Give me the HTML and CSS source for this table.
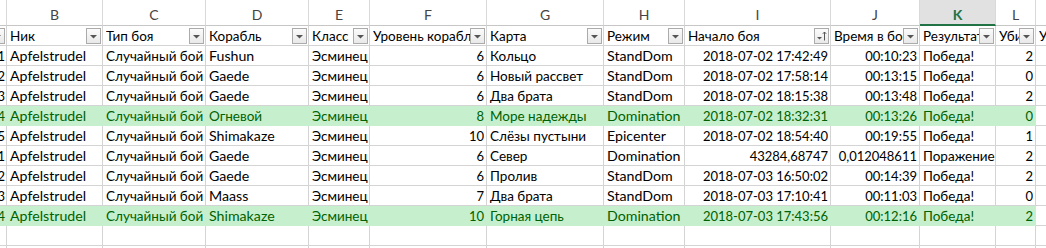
FILE: index.html
```html
<!DOCTYPE html>
<html lang="ru">
<head>
<meta charset="utf-8">
<title>Sheet</title>
<link rel="stylesheet" href="styles.css">
</head>
<body>
<div class="sheet">
  <div class="row letters">
    <div class="h"></div><div class="h">B</div><div class="h">C</div><div class="h">D</div><div class="h">E</div><div class="h">F</div><div class="h">G</div><div class="h">H</div><div class="h">I</div><div class="h">J</div><div class="h sel">K</div><div class="h">L</div><div class="h"></div>
  </div>
  <div class="row filters">
    <div class="c f"><span class="lbl"></span><span class="btn"><svg width="13" height="14" viewBox="0 0 13 14"><path d="M3 6h7l-3.5 3.5z" fill="#555"/></svg></span></div>
    <div class="c f"><span class="lbl">Ник</span><span class="btn"><svg width="13" height="14" viewBox="0 0 13 14"><path d="M3 6h7l-3.5 3.5z" fill="#555"/></svg></span></div>
    <div class="c f"><span class="lbl">Тип боя</span><span class="btn"><svg width="13" height="14" viewBox="0 0 13 14"><path d="M3 6h7l-3.5 3.5z" fill="#555"/></svg></span></div>
    <div class="c f"><span class="lbl">Корабль</span><span class="btn"><svg width="13" height="14" viewBox="0 0 13 14"><path d="M3 6h7l-3.5 3.5z" fill="#555"/></svg></span></div>
    <div class="c f"><span class="lbl">Класс</span><span class="btn"><svg width="13" height="14" viewBox="0 0 13 14"><path d="M3 6h7l-3.5 3.5z" fill="#555"/></svg></span></div>
    <div class="c f"><span class="lbl">Уровень корабля</span><span class="btn"><svg width="13" height="14" viewBox="0 0 13 14"><path d="M3 6h7l-3.5 3.5z" fill="#555"/></svg></span></div>
    <div class="c f"><span class="lbl">Карта</span><span class="btn"><svg width="13" height="14" viewBox="0 0 13 14"><path d="M3 6h7l-3.5 3.5z" fill="#555"/></svg></span></div>
    <div class="c f"><span class="lbl">Режим</span><span class="btn"><svg width="13" height="14" viewBox="0 0 13 14"><path d="M3 6h7l-3.5 3.5z" fill="#555"/></svg></span></div>
    <div class="c f"><span class="lbl">Начало боя</span><span class="btn"><svg width="13" height="14" viewBox="0 0 13 14"><path d="M2 8h5l-2.5 2.5z" fill="#555"/><path d="M9.5 11.5V3M7.8 4.8l1.7-1.8 1.7 1.8" stroke="#555" stroke-width="1" fill="none"/></svg></span></div>
    <div class="c f"><span class="lbl">Время в бою</span><span class="btn"><svg width="13" height="14" viewBox="0 0 13 14"><path d="M3 6h7l-3.5 3.5z" fill="#555"/></svg></span></div>
    <div class="c f"><span class="lbl">Результат</span><span class="btn"><svg width="13" height="14" viewBox="0 0 13 14"><path d="M3 6h7l-3.5 3.5z" fill="#555"/></svg></span></div>
    <div class="c f"><span class="lbl">Убийства</span><span class="btn"><svg width="13" height="14" viewBox="0 0 13 14"><path d="M3 6h7l-3.5 3.5z" fill="#555"/></svg></span></div>
    <div class="c f"><span class="lbl">Урон</span></div>
  </div>

  <div class="row"><div class="c n">1</div><div class="c">Apfelstrudel</div><div class="c">Случайный бой</div><div class="c">Fushun</div><div class="c">Эсминец</div><div class="c r">6</div><div class="c">Кольцо</div><div class="c">StandDom</div><div class="c r">2018-07-02 17:42:49</div><div class="c r">00:10:23</div><div class="c">Победа!</div><div class="c r">2</div><div class="c"></div></div>
  <div class="row"><div class="c n">2</div><div class="c">Apfelstrudel</div><div class="c">Случайный бой</div><div class="c">Gaede</div><div class="c">Эсминец</div><div class="c r">6</div><div class="c">Новый рассвет</div><div class="c">StandDom</div><div class="c r">2018-07-02 17:58:14</div><div class="c r">00:13:15</div><div class="c">Победа!</div><div class="c r">0</div><div class="c"></div></div>
  <div class="row"><div class="c n">3</div><div class="c">Apfelstrudel</div><div class="c">Случайный бой</div><div class="c">Gaede</div><div class="c">Эсминец</div><div class="c r">6</div><div class="c">Два брата</div><div class="c">StandDom</div><div class="c r">2018-07-02 18:15:38</div><div class="c r">00:13:48</div><div class="c">Победа!</div><div class="c r">2</div><div class="c"></div></div>
  <div class="row good"><div class="c n">4</div><div class="c">Apfelstrudel</div><div class="c">Случайный бой</div><div class="c ru">Огневой</div><div class="c">Эсминец</div><div class="c r">8</div><div class="c">Море надежды</div><div class="c">Domination</div><div class="c r">2018-07-02 18:32:31</div><div class="c r">00:13:26</div><div class="c">Победа!</div><div class="c r">0</div><div class="c plain"></div></div>
  <div class="row"><div class="c n">5</div><div class="c">Apfelstrudel</div><div class="c">Случайный бой</div><div class="c">Shimakaze</div><div class="c">Эсминец</div><div class="c r">10</div><div class="c">Слёзы пустыни</div><div class="c">Epicenter</div><div class="c r">2018-07-02 18:54:40</div><div class="c r">00:19:55</div><div class="c">Победа!</div><div class="c r">1</div><div class="c"></div></div>
  <div class="row"><div class="c n">1</div><div class="c">Apfelstrudel</div><div class="c">Случайный бой</div><div class="c">Gaede</div><div class="c">Эсминец</div><div class="c r">6</div><div class="c">Север</div><div class="c">Domination</div><div class="c r">43284,68747</div><div class="c r">0,012048611</div><div class="c">Поражение</div><div class="c r">2</div><div class="c"></div></div>
  <div class="row"><div class="c n">2</div><div class="c">Apfelstrudel</div><div class="c">Случайный бой</div><div class="c">Gaede</div><div class="c">Эсминец</div><div class="c r">6</div><div class="c">Пролив</div><div class="c">StandDom</div><div class="c r">2018-07-03 16:50:02</div><div class="c r">00:14:39</div><div class="c">Победа!</div><div class="c r">2</div><div class="c"></div></div>
  <div class="row"><div class="c n">3</div><div class="c">Apfelstrudel</div><div class="c">Случайный бой</div><div class="c">Maass</div><div class="c">Эсминец</div><div class="c r">7</div><div class="c">Два брата</div><div class="c">StandDom</div><div class="c r">2018-07-03 17:10:41</div><div class="c r">00:11:03</div><div class="c">Победа!</div><div class="c r">0</div><div class="c"></div></div>
  <div class="row good"><div class="c n">4</div><div class="c">Apfelstrudel</div><div class="c">Случайный бой</div><div class="c">Shimakaze</div><div class="c">Эсминец</div><div class="c r">10</div><div class="c">Горная цепь</div><div class="c">Domination</div><div class="c r">2018-07-03 17:43:56</div><div class="c r">00:12:16</div><div class="c">Победа!</div><div class="c r">2</div><div class="c plain"></div></div>
  <div class="row"><div class="c"></div><div class="c"></div><div class="c"></div><div class="c"></div><div class="c"></div><div class="c"></div><div class="c"></div><div class="c"></div><div class="c"></div><div class="c"></div><div class="c"></div><div class="c"></div><div class="c"></div></div>
  <div class="row"><div class="c"></div><div class="c"></div><div class="c"></div><div class="c"></div><div class="c"></div><div class="c"></div><div class="c"></div><div class="c"></div><div class="c"></div><div class="c"></div><div class="c"></div><div class="c"></div><div class="c"></div></div>
</div>
</body>
</html>
```

FILE: styles.css
```css
html, body {
  margin: 0;
  padding: 0;
  background: #fff;
  overflow: hidden;
}
body {
  width: 1046px;
  height: 248px;
  font-family: "Lato", "Noto Sans", sans-serif;
  font-size: 14.2px;
  color: #000;
}
.sheet {
  width: 1160px;
}
.row {
  display: grid;
  grid-template-columns: 7px 96px 103px 103px 61px 117px 117px 81px 146px 89px 76px 40px 100px;
  height: 20px;
}
.c {
  box-sizing: border-box;
  height: 20px;
  border-right: 1px solid #d4d4d4;
  border-bottom: 1px solid #d4d4d4;
  padding: 0 2px 0 3px;
  line-height: 20px;
  white-space: nowrap;
  overflow: hidden;
}
/* Cyrillic text columns */
.row > .c:nth-child(3),
.row > .c:nth-child(5),
.row > .c:nth-child(7),
.row > .c:nth-child(11),
.c.ru,
.filters .lbl {
  font-size: 13.5px;
}
/* numeric cells */
.r, .n {
  font-size: 13px;
}
.r {
  text-align: right;
  padding-right: 2px;
}
.n {
  display: flex;
  justify-content: flex-end;
  padding: 0 1px 0 0;
}
.good .c {
  background: #c6efce;
  color: #006100;
  border-right-color: #c6efce;
  border-bottom-color: #c6efce;
}
.good .c.plain {
  background: #fff;
  border-right-color: #d4d4d4;
  border-bottom-color: #d4d4d4;
}
.letters {
  height: 26px;
}
.h {
  box-sizing: border-box;
  height: 26px;
  border-right: 1px solid #d9d9d9;
  border-bottom: 1px solid #c6c6c6;
  text-align: center;
  line-height: 30px;
  color: #444;
  font-size: 14px;
}
.h.sel {
  background: #e1e1e1;
  color: #217346;
  font-weight: bold;
  border-bottom: 2px solid #217346;
}
.filters .c {
  display: flex;
  align-items: center;
  padding-right: 1px;
}
.filters .c:first-child {
  justify-content: flex-end;
}
.lbl {
  flex: 1 1 auto;
  min-width: 0;
  overflow: hidden;
  white-space: nowrap;
}
.filters .c:first-child .lbl {
  display: none;
}
.btn {
  flex: 0 0 auto;
  box-sizing: border-box;
  width: 15px;
  height: 16px;
  border: 1px solid #ababab;
  background: linear-gradient(#fbfbfb, #e9e9e9);
  display: flex;
  align-items: center;
  justify-content: center;
}
.btn svg {
  display: block;
}
```
